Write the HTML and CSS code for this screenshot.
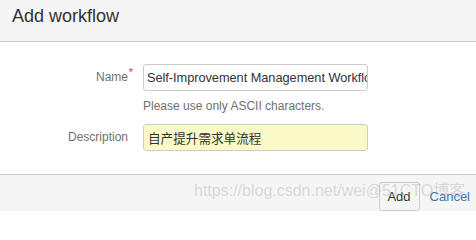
FILE: index.html
```html
<!DOCTYPE html>
<html>
<head>
<meta charset="utf-8">
<link rel="stylesheet" href="styles.css">
</head>
<body>
<div class="dialog">
  <div class="header"><h2 class="title">Add workflow</h2></div>
  <div class="content">
    <div class="row">
      <label class="label">Name<span class="req">*</span></label>
      <div class="field">
        <div class="input">Self-Improvement Management Workflow</div>
      </div>
    </div>
    <div class="help">Please use only ASCII characters.</div>
    <div class="row row-desc">
      <label class="label">Description</label>
      <div class="field">
        <div class="input input-yellow">自产提升需求单流程</div>
      </div>
    </div>
  </div>
  <div class="footer">
    <button class="btn">Add</button>
    <a class="cancel" href="#">Cancel</a>
  </div>
  <div class="watermark">https://blog.csdn.net/wei@51CTO博客</div>
</div>
</body>
</html>
```

FILE: styles.css
```css
html, body {
  margin: 0;
  padding: 0;
  background: #fff;
}
body {
  font-family: "Liberation Sans", Arial, "Noto Sans CJK SC", sans-serif;
  width: 476px;
  height: 211px;
  overflow: hidden;
}
.dialog {
  position: relative;
  width: 476px;
  height: 211px;
  overflow: hidden;
  display: flex;
  flex-direction: column;
}
.header {
  background: #f5f5f5;
  height: 41px;
  border-bottom: 1px solid #cccccc;
  box-sizing: content-box;
  display: flex;
  align-items: center;
  padding-left: 12px;
}
.title {
  margin: 0;
  font-size: 18px;
  font-weight: normal;
  color: #333333;
  line-height: 20px;
  position: relative;
  top: -4px;
}
.content {
  padding: 22px 0 23px 0;
  height: 88px;
  border-bottom: 1px solid #cccccc;
  display: flex;
  flex-direction: column;
}
.row {
  display: flex;
  align-items: center;
}
.label {
  width: 128px;
  text-align: right;
  font-size: 12px;
  color: #707070;
  padding-right: 15px;
  position: relative;
}
.req {
  color: #d04437;
  position: absolute;
  right: 10px;
  top: -4px;
  font-size: 11px;
}
.field {
  width: 225px;
}
.input {
  box-sizing: border-box;
  height: 27px;
  border: 1px solid #cccccc;
  border-radius: 3px;
  padding: 0 2px 0 3px;
  font-size: 12.8px;
  letter-spacing: -0.05px;
  line-height: 25px;
  color: #333333;
  white-space: nowrap;
  overflow: hidden;
  background: #fff;
}
.input-yellow {
  background: #fafac8;
  font-family: "Noto Sans CJK SC", sans-serif;
  font-size: 12.6px;
  letter-spacing: 0;
  padding-left: 4px;
}
.help {
  margin: 7px 0 0 143px;
  font-size: 12px;
  line-height: 16px;
  color: #707070;
}
.row-desc {
  margin-top: 10px;
}
.footer {
  flex: 1;
  background: #f5f5f5;
  display: flex;
  justify-content: flex-end;
  align-items: flex-start;
  padding: 7px 6px 0 0;
}
.btn {
  box-sizing: border-box;
  width: 41px;
  height: 29px;
  border: 1px solid #cccccc;
  border-radius: 3px;
  background: #f5f5f5;
  font-family: "Liberation Sans", Arial, sans-serif;
  font-size: 13px;
  color: #333333;
  padding: 0;
  margin-right: 10px;
}
.cancel {
  font-size: 13px;
  color: #3b73af;
  text-decoration: none;
  line-height: 29px;
}
.watermark {
  position: absolute;
  left: 194px;
  top: 182px;
  font-size: 16px;
  line-height: 18px;
  white-space: nowrap;
  color: rgba(170, 170, 170, 0.4);
  font-family: "Liberation Sans", Arial, "Noto Sans CJK SC", sans-serif;
  pointer-events: none;
}
```
